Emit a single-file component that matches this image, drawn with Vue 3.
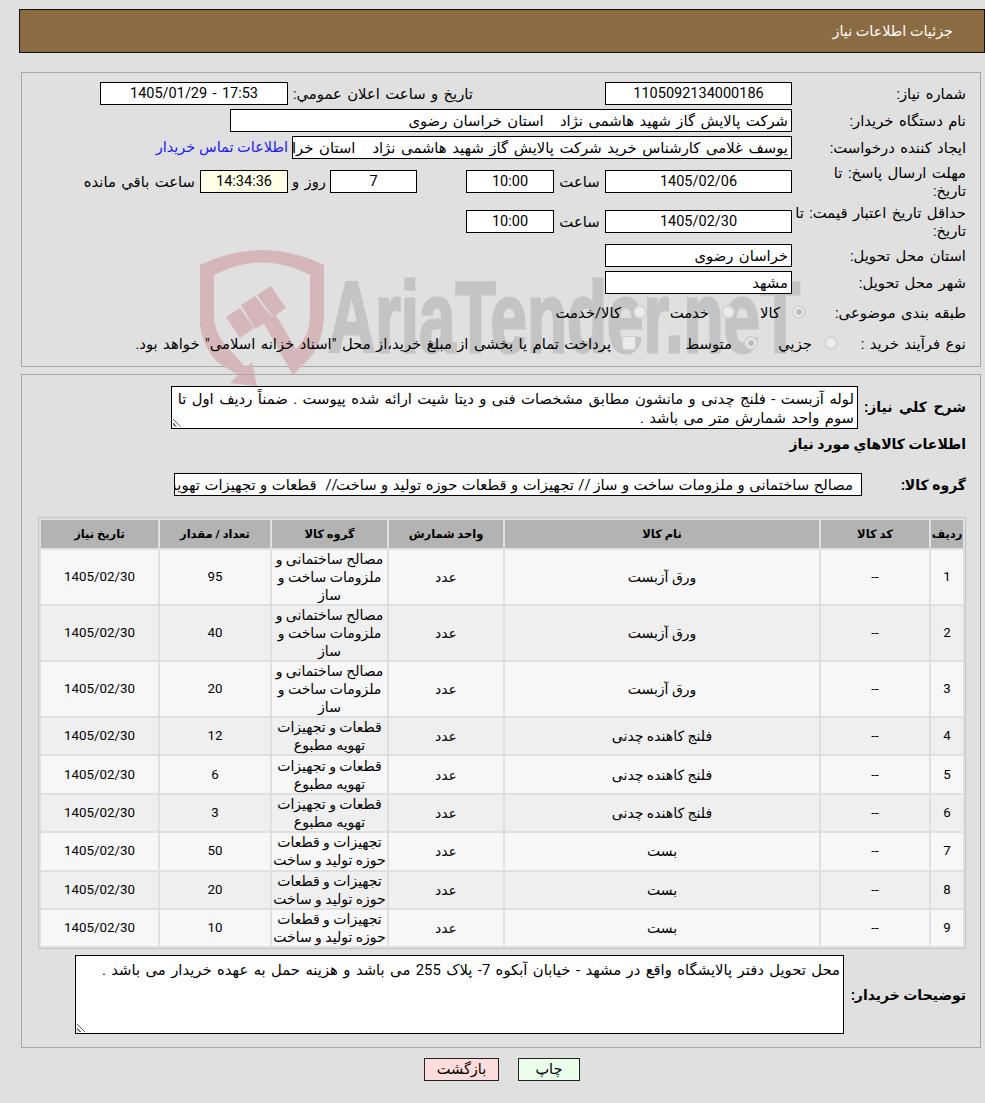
<template>
  <div class="page" dir="rtl">
    <header class="title-bar">جزئیات اطلاعات نیاز</header>

    <section class="panel info-panel">
      <svg class="watermark" viewBox="200 250 130 140" aria-hidden="true">
        <path class="wm-red" d="M200 265 Q262 235 324 265 L324 318 Q322 345 308 360 L293 375 L263 322 L275 314 L296 349 Q310 335 310 318 L310 275 Q262 250 214 275 L214 318 Q216 338 232 352 L246 368 L252 362 L257 386 L230 383 L238 375 L217 362 Q202 345 200 325 Z" />
        <path class="wm-red" d="M226 317 L240 308 L254 328 L240 338 Z M241 305 L255 296 L273 318 L255 329 Z M257 295 L271 286 L286 308 L273 317 Z" />
      </svg>
      <span class="wm-text" dir="ltr" aria-hidden="true">AriaTender.neT</span>

      <div class="row">
        <label class="lbl">شماره نیاز:</label>
        <div class="box box-main center">1105092134000186</div>
        <label class="lbl-inline announce">تاریخ و ساعت اعلان عمومي:</label>
        <div class="box box-announce center">17:53 - 1405/01/29</div>
      </div>
      <div class="row">
        <label class="lbl">نام دستگاه خریدار:</label>
        <div class="box box-wide clip">شرکت پالایش گاز شهید هاشمی نژاد &nbsp; استان خراسان رضوی</div>
      </div>
      <div class="row">
        <label class="lbl">ایجاد کننده درخواست:</label>
        <div class="box box-creator clip">یوسف غلامی کارشناس خرید شرکت پالایش گاز شهید هاشمی نژاد &nbsp; استان خراسان رضوی</div>
        <a class="contact">اطلاعات تماس خریدار</a>
      </div>
      <div class="row row-tall">
        <label class="lbl two-line">مهلت ارسال پاسخ: تا<br />تاریخ:</label>
        <div class="box box-main center">1405/02/06</div>
        <span class="lbl-inline hour">ساعت</span>
        <div class="box box-time center">10:00</div>
        <div class="box box-days center">7</div>
        <span class="lbl-inline day">روز و</span>
        <div class="box box-remain center">14:34:36</div>
        <span class="lbl-inline remain">ساعت باقي مانده</span>
      </div>
      <div class="row row-tall">
        <label class="lbl two-line">حداقل تاریخ اعتبار قیمت: تا<br />تاریخ:</label>
        <div class="box box-main center">1405/02/30</div>
        <span class="lbl-inline hour">ساعت</span>
        <div class="box box-time center">10:00</div>
      </div>
      <div class="row">
        <label class="lbl">استان محل تحویل:</label>
        <div class="box box-main">خراسان رضوی</div>
      </div>
      <div class="row">
        <label class="lbl">شهر محل تحویل:</label>
        <div class="box box-main">مشهد</div>
      </div>
      <div class="row row-radio">
        <label class="lbl lbl-cat">طبقه بندی موضوعی:</label>
        <div class="radios cat">
          <span v-for="c in categories" :key="c.text" class="radio-item">
            <i class="radio" :class="{ on: c.on }"></i>{{ c.text }}
          </span>
        </div>
      </div>
      <div class="row row-radio">
        <label class="lbl lbl-proc">نوع فرآیند خرید :</label>
        <div class="radios proc">
          <span class="radio-item"><i class="radio"></i>جزیي</span>
          <span class="radio-item"><i class="radio on"></i>متوسط</span>
          <span class="radio-item"><i class="check"></i>پرداخت تمام یا بخشی از مبلغ خرید،از محل "اسناد خزانه اسلامی" خواهد بود.</span>
        </div>
      </div>
    </section>

    <section class="panel goods-panel">
      <div class="desc-row">
        <label class="bold-lbl">شرح کلي نیاز:</label>
        <div class="area area-desc">لوله آزبست - فلنج چدنی و مانشون مطابق مشخصات فنی و دیتا شیت ارائه شده پیوست . ضمناً ردیف اول تا سوم واحد شمارش متر می باشد .<i class="grip"></i></div>
      </div>
      <h3 class="goods-title">اطلاعات کالاهاي مورد نیاز</h3>
      <div class="group-row">
        <label class="bold-lbl group-lbl">گروه کالا:</label>
        <div class="box box-group clip">مصالح ساختمانی و ملزومات ساخت و ساز // تجهیزات و قطعات حوزه تولید و ساخت//&nbsp; قطعات و تجهیزات تهویة مطبوع</div>
      </div>

      <table class="goods">
        <colgroup>
          <col class="c-idx" />
          <col class="c-code" />
          <col class="c-name" />
          <col class="c-unit" />
          <col class="c-group" />
          <col class="c-qty" />
          <col class="c-date" />
        </colgroup>
        <thead>
          <tr>
            <th v-for="h in headers" :key="h">{{ h }}</th>
          </tr>
        </thead>
        <tbody>
          <tr v-for="(item, i) in items" :key="i">
            <td class="num">{{ i + 1 }}</td>
            <td class="num">--</td>
            <td>{{ item.name }}</td>
            <td>عدد</td>
            <td>{{ item.group }}</td>
            <td class="num">{{ item.qty }}</td>
            <td class="num">1405/02/30</td>
          </tr>
        </tbody>
      </table>

      <div class="notes-row">
        <label class="bold-lbl notes-lbl">توضیحات خریدار:</label>
        <div class="area area-notes">محل تحویل دفتر پالایشگاه واقع در مشهد - خیابان آبکوه 7- پلاک 255 می باشد و هزینه حمل به عهده خریدار می باشد .<i class="grip"></i></div>
      </div>
    </section>

    <div class="actions">
      <button class="btn print">چاپ</button>
      <button class="btn back">بازگشت</button>
    </div>
  </div>
</template>

<script setup>
const categories = [
  { text: "کالا", on: true },
  { text: "خدمت", on: false },
  { text: "کالا/خدمت", on: false },
];

const headers = ["ردیف", "کد کالا", "نام کالا", "واحد شمارش", "گروه کالا", "تعداد / مقدار", "تاریخ نیاز"];

const building = "مصالح ساختمانی و ملزومات ساخت و ساز";
const hvac = "قطعات و تجهیزات تهویه مطبوع";
const tools = "تجهیزات و قطعات حوزه تولید و ساخت";

const items = [
  { name: "ورق آزبست", group: building, qty: 95 },
  { name: "ورق آزبست", group: building, qty: 40 },
  { name: "ورق آزبست", group: building, qty: 20 },
  { name: "فلنج کاهنده چدنی", group: hvac, qty: 12 },
  { name: "فلنج کاهنده چدنی", group: hvac, qty: 6 },
  { name: "فلنج کاهنده چدنی", group: hvac, qty: 3 },
  { name: "بست", group: tools, qty: 50 },
  { name: "بست", group: tools, qty: 20 },
  { name: "بست", group: tools, qty: 10 },
];
</script>

<style>
html,
body {
  background: #e0e0e0;
}
</style>

<style scoped>
.page {
  width: 985px;
  height: 1103px;
  box-sizing: border-box;
  padding: 9px 0 0 19px;
  background: #e0e0e0;
  color: #000;
  font-family: Roboto, "DejaVu Sans", sans-serif;
  font-size: 14.8px;
  word-spacing: 1.75px;
  overflow: hidden;
}

.title-bar {
  height: 44px;
  box-sizing: border-box;
  line-height: 44px;
  padding-right: 31px;
  background: #8b6b41;
  border: 1px solid #111;
  color: #fff;
  font-size: 14.4px;
  word-spacing: 0;
}

.panel {
  position: relative;
  width: 960px;
  margin: 0 4px 0 0;
  border: 1px solid #a8a8a8;
  box-sizing: border-box;
}

.info-panel {
  height: 295px;
  padding-top: 9px;
  margin-top: 19px;
}

.watermark {
  position: absolute;
  left: 178px;
  top: 177px;
  width: 130px;
  height: 140px;
}

.wm-red {
  fill: #d6b7b9;
}

.wm-text {
  position: absolute;
  left: 306px;
  top: 194px;
  font-family: "Liberation Sans", sans-serif;
  font-size: 100px;
  line-height: 100px;
  font-weight: bold;
  word-spacing: 0;
  color: #c4c4c4;
  -webkit-text-stroke: 3px #c4c4c4;
  white-space: nowrap;
  transform: scaleX(0.655);
  transform-origin: left top;
}

.row {
  position: relative;
  z-index: 1;
  display: flex;
  align-items: center;
  height: 23px;
  margin-bottom: 4px;
}

.row-tall {
  margin-top: 11px;
  margin-bottom: 17px;
}

.row-tall + .row-tall {
  margin-bottom: 11px;
}

.row-radio {
  height: 24px;
  margin-top: 7px;
  margin-bottom: 6px;
}

.lbl {
  flex: none;
  width: 188px;
  padding-right: 14px;
  box-sizing: border-box;
  white-space: nowrap;
}

.lbl-cat {
  width: 174px;
}

.lbl-proc {
  width: 142px;
}

.two-line {
  line-height: 18px;
}

.lbl-inline {
  flex: none;
  white-space: nowrap;
}

.box {
  flex: none;
  box-sizing: border-box;
  height: 23px;
  line-height: 22px;
  border: 1px solid #000;
  background: #fff;
  padding: 0 3px;
  white-space: nowrap;
}

.center {
  text-align: center;
  font-size: 14.5px;
}

.clip {
  overflow: hidden;
}

.box-main {
  width: 187px;
}

.box-wide {
  width: 562px;
}

.box-creator {
  width: 500px;
  word-spacing: 2px;
}

.announce {
  width: 317px;
  padding-right: 132px;
  box-sizing: border-box;
}

.box-announce {
  width: 188px;
}

.contact {
  margin-right: 4px;
  color: #1a1aff;
  font-size: 14.5px;
  word-spacing: 0;
  white-space: nowrap;
}

.hour {
  width: 51px;
  text-align: center;
}

.box-time {
  width: 88px;
}

.box-days {
  width: 87px;
  margin-right: 49px;
}

.day {
  width: 42px;
  text-align: center;
}

.box-remain {
  width: 88px;
  background: #ffffe8;
}

.remain {
  margin-right: 5px;
}

.radios {
  display: flex;
  align-items: center;
}

.radio-item {
  display: flex;
  align-items: center;
  white-space: nowrap;
}

.cat .radio-item:nth-child(1) {
  width: 71px;
}

.cat .radio-item:nth-child(2) {
  width: 88px;
}

.proc .radio-item:nth-child(1) {
  width: 80px;
}

.proc .radio-item:nth-child(2) {
  width: 122px;
}

.radio {
  flex: none;
  width: 14px;
  height: 14px;
  margin-left: 12px;
  margin-top: -3px;
  border-radius: 50%;
  border: 2px solid #d4d4d4;
  background: #ececec;
  box-sizing: border-box;
}

.radio.on {
  background: #bcbcbc;
  box-shadow: inset 0 0 0 2px #efefef;
}

.check {
  flex: none;
  width: 14px;
  height: 14px;
  margin-left: 11px;
  margin-top: -3px;
  border: 1px solid #cfcfcf;
  border-radius: 2px;
  background: #ececec;
  box-sizing: border-box;
}

.goods-panel {
  height: 674px;
  margin-top: 7px;
  padding-top: 10px;
}

.desc-row {
  display: flex;
  align-items: center;
  height: 44px;
}

.bold-lbl {
  flex: none;
  width: 122px;
  padding-right: 14px;
  box-sizing: border-box;
  font-weight: bold;
  font-size: 14px;
  word-spacing: 0;
  white-space: nowrap;
}

.desc-row .bold-lbl {
  word-spacing: 3px;
}

.area {
  position: relative;
  box-sizing: border-box;
  border: 1px solid #000;
  background: #fff;
  padding: 3px 3px 0;
  line-height: 19px;
}

.area-desc {
  width: 687px;
  height: 43px;
}

.goods-title {
  margin: 5px 14px 0 0;
  height: 28px;
  line-height: 20px;
  font-size: 14px;
  font-weight: bold;
  word-spacing: 0;
}

.group-row {
  display: flex;
  align-items: center;
  margin-top: 11px;
  height: 23px;
}

.group-lbl {
  width: 118px;
}

.box-group {
  width: 688px;
  padding-right: 8px;
  word-spacing: 0.8px;
}

.goods {
  width: 928px;
  margin: 21px 14px 0 0;
  table-layout: fixed;
  border-collapse: separate;
  border-spacing: 2px;
  border: 1px solid #c4c4c4;
  font-size: 14px;
  word-spacing: 0;
  text-align: center;
}

.c-idx {
  width: 32px;
}

.c-code {
  width: 108px;
}

.c-name {
  width: 314px;
}

.c-unit {
  width: 114px;
}

.c-group {
  width: 115px;
}

.c-qty {
  width: 110px;
}

.c-date {
  width: 117px;
}

.goods th {
  height: 28px;
  padding: 0;
  background: #b3b3b3;
  font-size: 11.5px;
}

.goods td {
  padding: 0;
  line-height: 18px;
}

.goods td.num {
  font-size: 13.3px;
  font-variant-ligatures: none;
}

.goods tbody tr:nth-child(n + 4) td {
  height: 36.4px;
}

.goods tbody tr:nth-child(odd) td {
  background: #f7f7f7;
}

.goods tbody tr:nth-child(even) td {
  background: #efefef;
}

.notes-row {
  display: flex;
  align-items: center;
  margin-top: 6px;
}

.notes-lbl {
  width: 136px;
}

.area-notes {
  width: 769px;
  height: 79px;
  padding-top: 5px;
}

.grip {
  position: absolute;
  left: 1px;
  bottom: 1px;
  width: 10px;
  height: 10px;
  background: repeating-linear-gradient(45deg, transparent 0 2px, #666 2px 3px);
  clip-path: polygon(0 0, 100% 100%, 0 100%);
}

.actions {
  display: flex;
  justify-content: center;
  gap: 19px;
  margin-top: 10px;
}

.btn {
  height: 23px;
  font-family: inherit;
  font-size: 14.5px;
  border: 1px solid #222;
  padding: 0;
}

.print {
  width: 62px;
  background: #eaffea;
}

.back {
  width: 75px;
  background: #ffdcdc;
}
</style>
